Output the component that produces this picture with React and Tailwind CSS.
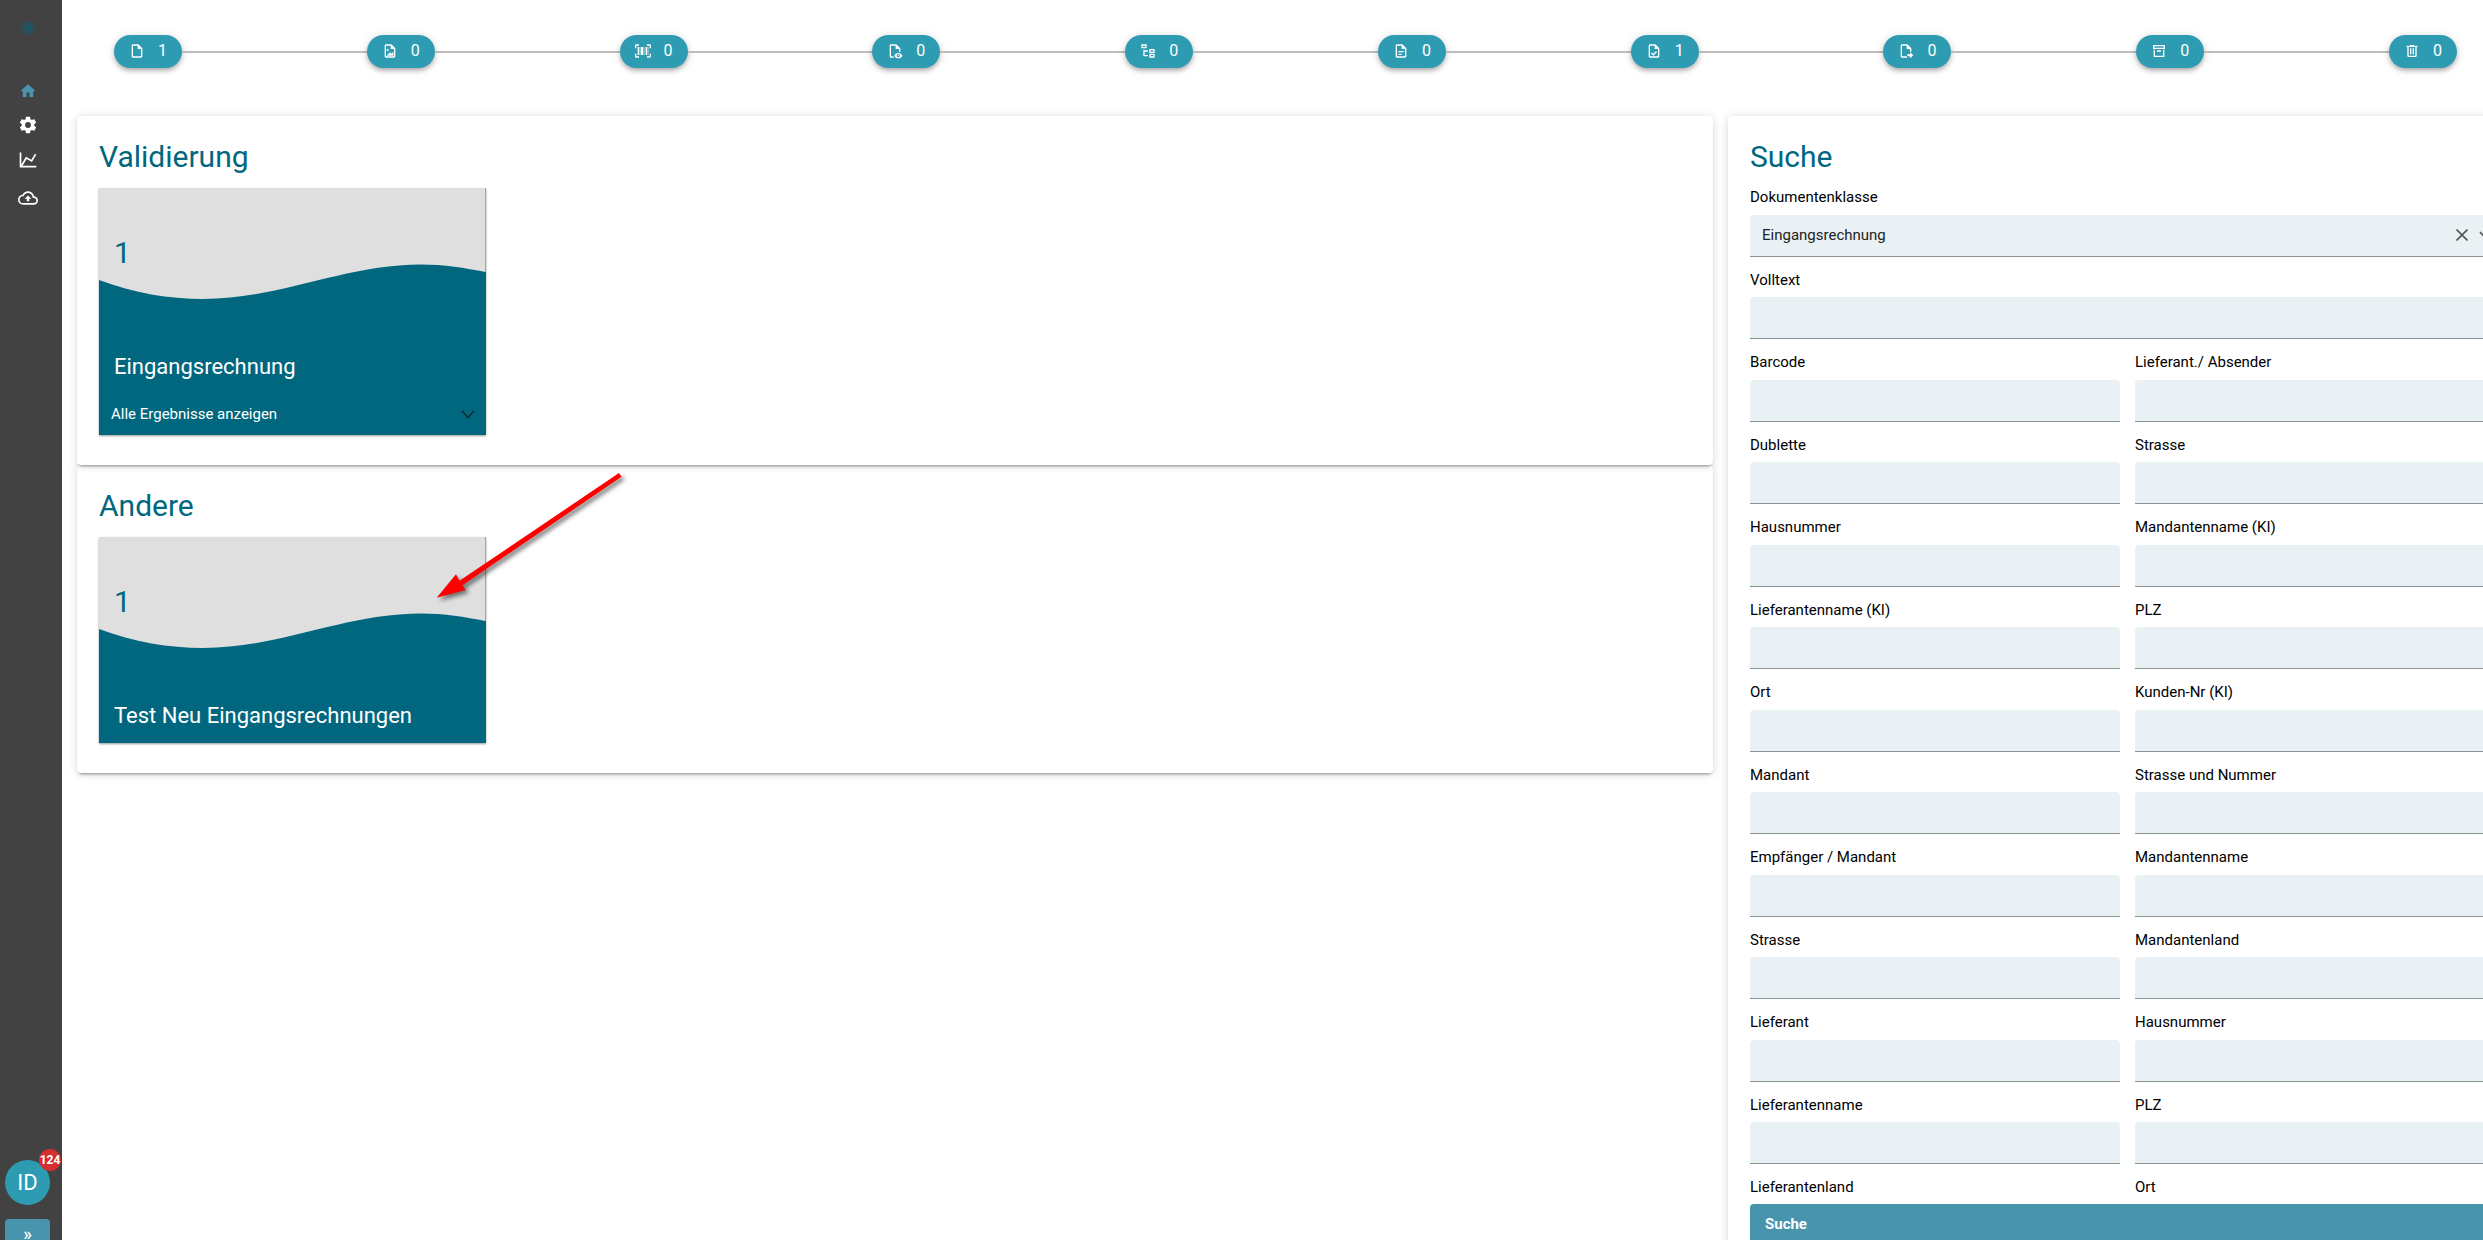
import React from 'react';

const ICONS = {
  home: 'M10,20V14H14V20H19V12H22L12,3L2,12H5V20H10Z',
  cog: 'M12,15.5A3.5,3.5 0 0,1 8.5,12A3.5,3.5 0 0,1 12,8.5A3.5,3.5 0 0,1 15.5,12A3.5,3.5 0 0,1 12,15.5M19.43,12.97C19.47,12.65 19.5,12.33 19.5,12C19.5,11.67 19.47,11.34 19.43,11L21.54,9.37C21.73,9.22 21.78,8.95 21.66,8.73L19.66,5.27C19.54,5.05 19.27,4.96 19.05,5.05L16.56,6.05C16.04,5.66 15.5,5.32 14.87,5.07L14.5,2.42C14.46,2.18 14.25,2 14,2H10C9.75,2 9.54,2.18 9.5,2.42L9.13,5.07C8.5,5.32 7.96,5.66 7.44,6.05L4.95,5.05C4.73,4.96 4.46,5.05 4.34,5.27L2.34,8.73C2.21,8.95 2.27,9.22 2.46,9.37L4.57,11C4.53,11.34 4.5,11.67 4.5,12C4.5,12.33 4.53,12.65 4.57,12.97L2.46,14.63C2.27,14.78 2.21,15.05 2.34,15.27L4.34,18.73C4.46,18.95 4.73,19.03 4.95,18.95L7.44,17.94C7.96,18.34 8.5,18.68 9.13,18.93L9.5,21.58C9.54,21.82 9.75,22 10,22H14C14.25,22 14.46,21.82 14.5,21.58L14.87,18.93C15.5,18.67 16.04,18.34 16.56,17.94L19.05,18.95C19.27,19.03 19.54,18.95 19.66,18.73L21.66,15.27C21.78,15.05 21.73,14.78 21.54,14.63L19.43,12.97Z',
  chart: 'M16,11.78L20.24,4.45L21.97,5.45L16.74,14.5L10.23,10.75L5.46,19H22V21H2V3H4V17.54L9.5,8L16,11.78Z',
  cloud: 'M19.35,10.04C18.67,6.59 15.64,4 12,4C9.11,4 6.6,5.64 5.35,8.04C2.34,8.36 0,10.91 0,14A6,6 0 0,0 6,20H19A5,5 0 0,0 24,15C24,12.36 21.95,10.22 19.35,10.04M19,18H6A4,4 0 0,1 2,14C2,11.95 3.53,10.24 5.56,10.03L6.63,9.92L7.13,8.97C8.08,7.14 9.94,6 12,6C14.62,6 16.88,7.86 17.39,10.43L17.69,11.93L19.22,12.04C20.78,12.14 22,13.45 22,15A3,3 0 0,1 19,18M8,13H10.55V16H13.45V13H16L12,9L8,13Z',
  file: 'M14,2H6A2,2 0 0,0 4,4V20A2,2 0 0,0 6,22H18A2,2 0 0,0 20,20V8L14,2M18,20H6V4H13V9H18V20Z',
  image: 'M14 2H6C4.89 2 4 2.9 4 4V20C4 21.11 4.89 22 6 22H18C19.11 22 20 21.11 20 20V8L14 2M18 20H6V4H13V9H18V20M17 13V19H7L12 14L14 16M10 10.5C10 11.33 9.33 12 8.5 12S7 11.33 7 10.5 7.67 9 8.5 9 10 9.67 10 10.5Z',
  barcode: 'M4,6H6V18H4V6M7,6H8V18H7V6M9,6H12V18H9V6M13,6H14V18H13V6M16,6H18V18H16V6M19,6H20V18H19V6M2,4V8H0V4A2,2 0 0,1 2,2H6V4H2M22,2A2,2 0 0,1 24,4V8H22V4H18V2H22M2,16V20H6V22H2A2,2 0 0,1 0,20V16H2M22,20V16H24V20A2,2 0 0,1 22,22H18V20H22Z',
  eye: 'M17,18C17.56,18 18,18.44 18,19C18,19.56 17.56,20 17,20C16.44,20 16,19.56 16,19C16,18.44 16.44,18 17,18M17,15C14.27,15 11.94,16.66 11,19C11.94,21.34 14.27,23 17,23C19.73,23 22.06,21.34 23,19C22.06,16.66 19.73,15 17,15M17,21.5A2.5,2.5 0 0,1 14.5,19A2.5,2.5 0 0,1 17,16.5A2.5,2.5 0 0,1 19.5,19A2.5,2.5 0 0,1 17,21.5M9.27,20H6V4H13V9H18V13.07C18.7,13.15 19.36,13.32 20,13.56V8L14,2H6A2,2 0 0,0 4,4V20A2,2 0 0,0 6,22H10.5C10,21.41 9.59,20.73 9.27,20Z',
  tree: 'M12 13H7V18H12V20H5V10H7V11H12V13M8 4V6H4V4H8M10 2H2V8H10V2M20 11V13H16V11H20M22 9H14V15H22V9M20 18V20H16V18H20M22 16H14V22H22V16Z',
  document: 'M6,2A2,2 0 0,0 4,4V20A2,2 0 0,0 6,22H18A2,2 0 0,0 20,20V8L14,2H6M6,4H13V9H18V20H6V4M8,12V14H16V12H8M8,16V18H13V16H8Z',
  check: 'M14,2H6A2,2 0 0,0 4,4V20A2,2 0 0,0 6,22H18A2,2 0 0,0 20,20V8L14,2M18,20H6V4H13V9H18V20M10.9,19L7.5,15.6L8.9,14.2L10.9,16.2L15.1,12L16.5,13.4L10.9,19Z',
  move: 'M14,2H6C4.89,2 4,2.89 4,4V20A2,2 0 0,0 6,22H13.8C13.3,21.4 13,20.7 13,20H6V4H13V9H18V13C18.7,13 19.4,13.1 20,13.3V8L14,2M18,23V20H14V17H18V14L23,18.5L18,23Z',
  archive: 'M20 21H4V10H6V19H18V10H20V21M3 3H21V9H3V3M9.5 11H14.5C14.78 11 15 11.22 15 11.5V13H9V11.5C9 11.22 9.22 11 9.5 11M5 5V7H19V5H5Z',
  trash: 'M9,3V4H4V6H5V19A2,2 0 0,0 7,21H17A2,2 0 0,0 19,19V6H20V4H15V3H9M7,6H17V19H7V6M9,8V17H11V8H9M13,8V17H15V8H13Z',
};

const STEPS = [
  ['file', 1], ['image', 0], ['barcode', 0], ['eye', 0], ['tree', 0],
  ['document', 0], ['check', 1], ['move', 0], ['archive', 0], ['trash', 0],
];

const FIELDS = [
  'Barcode', 'Lieferant./ Absender',
  'Dublette', 'Strasse',
  'Hausnummer', 'Mandantenname (KI)',
  'Lieferantenname (KI)', 'PLZ',
  'Ort', 'Kunden-Nr (KI)',
  'Mandant', 'Strasse und Nummer',
  'Empfänger / Mandant', 'Mandantenname',
  'Strasse', 'Mandantenland',
  'Lieferant', 'Hausnummer',
  'Lieferantenname', 'PLZ',
  'Lieferantenland', 'Ort',
];

const CARD = 'rounded bg-white px-[22px] pt-[21px] shadow-[0_3px_3px_-2px_rgba(0,0,0,0.4),0_1px_8px_rgba(0,0,0,0.16)]';

function Icon({ name, className }) {
  return (
    <svg viewBox="0 0 24 24" fill="currentColor" fillRule="evenodd" className={className} aria-hidden="true">
      <path d={ICONS[name]} />
    </svg>
  );
}

function Chevron({ className }) {
  return (
    <svg viewBox="0 0 14 9" className={className} fill="none" stroke="currentColor" strokeWidth="1.6" aria-hidden="true">
      <path d="M1 1L7 7.500L13 1" />
    </svg>
  );
}

function Logo() {
  const dots = [];
  for (let row = 0; row < 7; row++) {
    for (let col = 0; col < 7; col++) {
      const dist = Math.hypot(row - 3, col - 3);
      if (dist < 3.7) {
        dots.push(<circle key={`${row}-${col}`} cx={col * 2 + 2} cy={row * 2 + 2} r={1 - dist * 0.13} />);
      }
    }
  }
  return <svg viewBox="0 0 16 16" fill="#00677f" className="size-4" aria-hidden="true">{dots}</svg>;
}

function Sidebar() {
  return (
    <aside className="flex w-[62px] shrink-0 flex-col bg-[#424242] pt-5 text-white">
      <div className="flex w-[55px] flex-1 flex-col items-center">
        <Logo />
        <nav className="mt-[45px] flex flex-col items-center">
          <a href="#home" aria-label="Start" className="flex h-5 items-center text-[#4994ad]"><Icon name="home" className="size-[18px]" /></a>
          <a href="#settings" aria-label="Einstellungen" className="mt-[14px]"><Icon name="cog" className="size-5" /></a>
          <a href="#stats" aria-label="Statistik" className="mt-[15px]"><Icon name="chart" className="size-5" /></a>
          <a href="#upload" aria-label="Upload" className="mt-[18px]"><Icon name="cloud" className="size-5" /></a>
        </nav>
        <button className="relative mt-auto flex size-[45px] items-center justify-center rounded-full bg-[#2d9cb2] text-[22px]">
          ID
          <span className="absolute -top-[11px] -right-[11px] flex size-[22px] items-center justify-center rounded-full bg-[#d32f2f] text-xs font-bold">124</span>
        </button>
        <button className="mt-[14px] flex h-[21px] w-[45px] items-end justify-center rounded-t bg-[#4994ad] text-lg leading-3 font-medium">»</button>
      </div>
    </aside>
  );
}

function Stepper() {
  return (
    <div className="flex items-center pr-[26px] pl-[52px]">
      {STEPS.map(([icon, count], i) => (
        <React.Fragment key={icon}>
          {i > 0 && <div className="h-0.5 flex-1 bg-[#bdbdbd]" />}
          <button className="flex h-[33px] w-[68px] items-center justify-between rounded-full bg-[#2d9cb2] pr-[15px] pb-0.5 pl-[15px] text-base text-white shadow-[0_3px_5px_-1px_rgba(0,0,0,0.3),0_1px_10px_rgba(0,0,0,0.14)]">
            <Icon name={icon} className="size-4" />
            {count}
          </button>
        </React.Fragment>
      ))}
    </div>
  );
}

function Tile({ title, count, children }) {
  return (
    <div className="mt-[11px] w-[387px] bg-[#00677f] text-white shadow-[0_1px_2px_rgba(0,0,0,0.4)]">
      <div className="relative flex h-[206px] flex-col justify-between px-[15px] pt-[45px] pb-[11px]">
        <svg viewBox="0 0 387 112" preserveAspectRatio="none" className="absolute top-0 left-0 h-28 w-full" aria-hidden="true">
          <path d="M0 0H386.6V84C366 80 345 76.500 322 76.500C246 76.500 180 111 104 111C70 111 35 105 0 92Z" fill="#dfdfdf" />
        </svg>
        <div className="relative text-[30px] leading-10 text-[#00677f]">{count}</div>
        <div className="relative text-[22px] leading-8">{title}</div>
      </div>
      {children}
    </div>
  );
}

function Field({ label, id, wide }) {
  return (
    <div className={wide ? 'col-span-2' : ''}>
      <label htmlFor={id} className="block leading-normal">{label}</label>
      <input id={id} type="text" className="mt-1.5 block h-[42px] w-full rounded-t border-b border-[#8a9496] bg-[#e9f1f4] px-3 outline-none" />
    </div>
  );
}

function SearchPanel() {
  return (
    <form className={`${CARD} flex h-[1150px] flex-col pb-5`}>
      <h2 className="text-[30px] leading-10 text-[#00677f]">Suche</h2>
      <div className="grid min-h-0 flex-1 grid-cols-2 content-start gap-x-[15px] gap-y-3 overflow-hidden pt-[9px] text-[15px] text-black">
        <div className="col-span-2">
          <label htmlFor="docclass" className="block leading-normal">Dokumentenklasse</label>
          <div className="mt-1.5 flex h-[42px] items-center rounded-t border-b border-[#8a9496] bg-[#e9f1f4] text-[#555]">
            <select id="docclass" className="h-full flex-1 appearance-none bg-transparent px-3 text-[#222] outline-none">
              <option>Eingangsrechnung</option>
            </select>
            <button type="button" aria-label="Leeren">
              <svg viewBox="0 0 12 12" className="size-3" fill="none" stroke="currentColor" strokeWidth="1.6"><path d="M0.500 0.500L11.500 11.500M11.500 0.500L0.500 11.500" /></svg>
            </button>
            <Chevron className="mr-3 ml-[11px] h-[9px] w-[14px]" />
          </div>
        </div>
        <Field label="Volltext" id="fulltext" wide />
        {FIELDS.map((label, i) => <Field key={i} label={label} id={`field-${i}`} />)}
      </div>
      <button type="button" className="h-[42px] shrink-0 rounded bg-[#4994ad] px-[15px] pb-0.5 text-left text-[15px] font-bold text-white">Suche</button>
    </form>
  );
}

export default function App() {
  return (
    <div className="flex h-screen overflow-hidden bg-white font-[Roboto,sans-serif] text-black">
      <Sidebar />
      <main className="min-w-0 flex-1 pt-[35px]">
        <Stepper />
        <div className="mt-12 -mr-11 ml-[15px] grid grid-cols-[1636fr_799fr] items-start gap-[15px]">
          <div>
            <section className={`${CARD} relative z-10 pb-[30px]`}>
              <h2 className="text-[30px] leading-10 text-[#00677f]">Validierung</h2>
              <Tile title="Eingangsrechnung" count={1}>
                <button className="flex h-[41px] w-full items-center justify-between pr-[11px] pl-3 text-[15px]">
                  Alle Ergebnisse anzeigen
                  <Chevron className="h-[9px] w-[14px] text-[#0d2b33]" />
                </button>
              </Tile>
            </section>
            <section className={`${CARD} relative pb-[30px]`}>
              <h2 className="text-[30px] leading-10 text-[#00677f]">Andere</h2>
              <Tile title="Test Neu Eingangsrechnungen" count={1} />
              {/* red pointer laid over the tile */}
              <svg viewBox="0 0 190 132" className="absolute top-[7px] left-[357px] z-20 h-[132px] w-[190px] drop-shadow-[3px_3px_2px_rgba(0,0,0,0.5)]" aria-hidden="true">
                <path d="M185 1L187.500 4.800L28.500 113.200L31.500 118L2.700 125.700L22 102.300L25.500 108.700Z" fill="#f00" />
              </svg>
            </section>
          </div>
          <SearchPanel />
        </div>
      </main>
    </div>
  );
}
